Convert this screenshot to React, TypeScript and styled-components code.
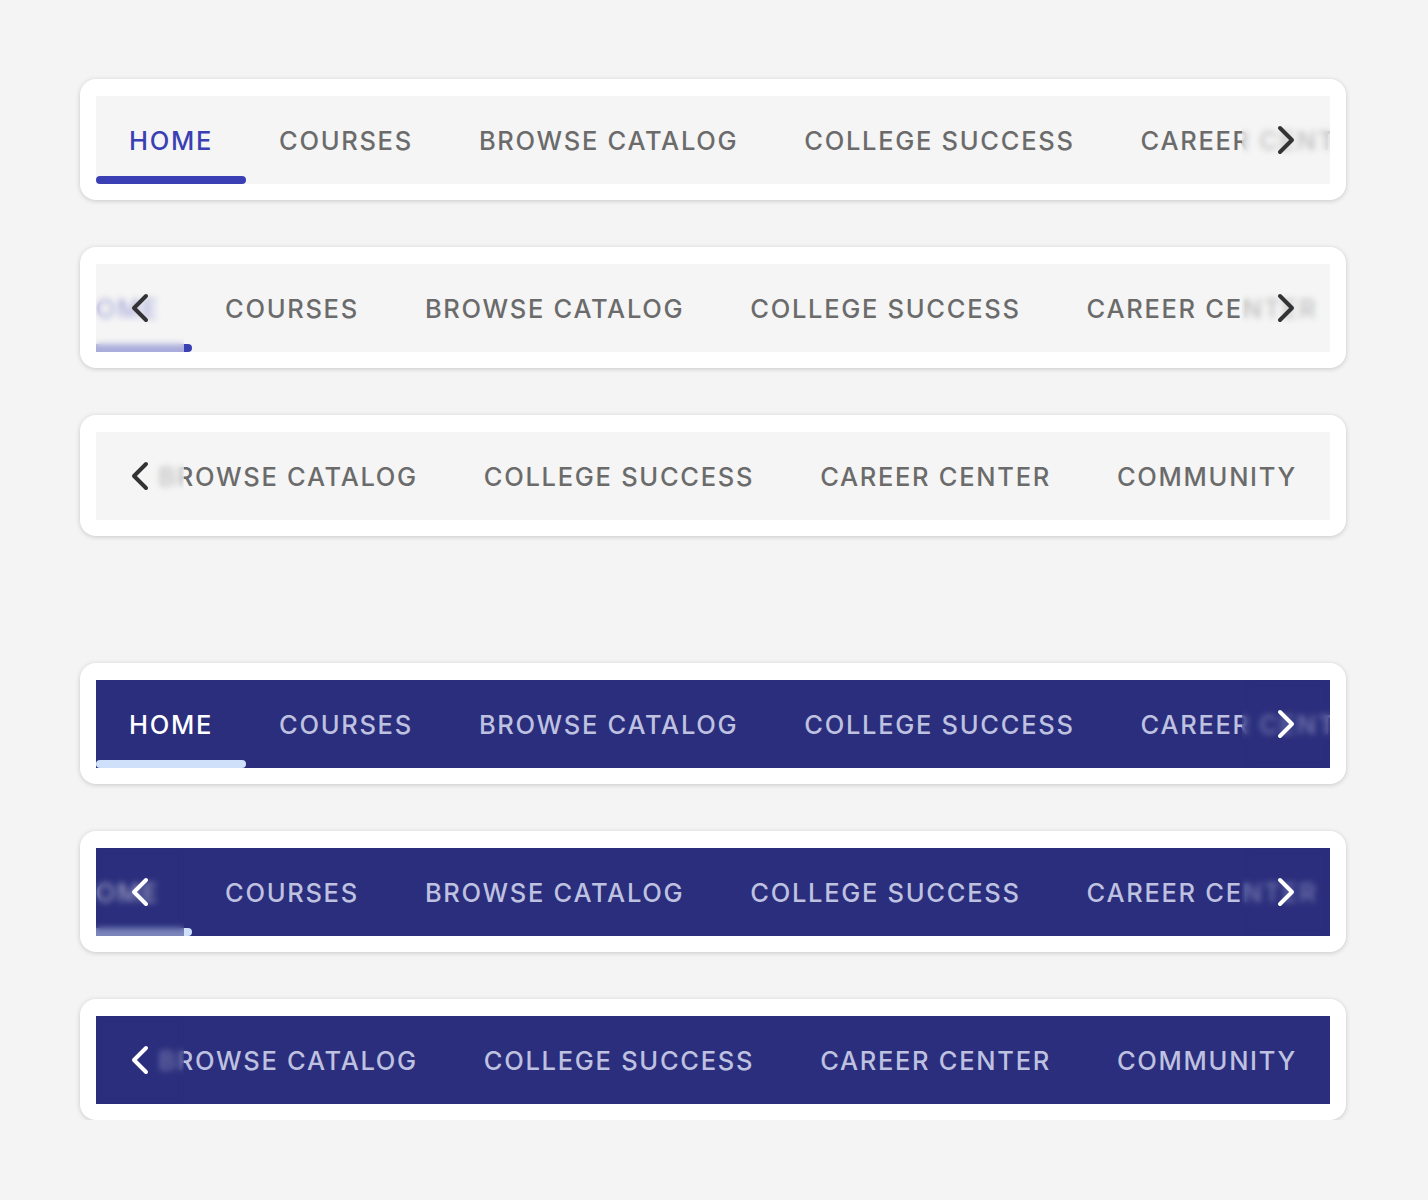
import React from 'react'
import styled, { createGlobalStyle, css } from 'styled-components'

type Variant = 'light' | 'dark'

const palette = {
    light: {
        bar: '#f5f5f5',
        text: '#6b6b6b',
        active: '#3a3fb3',
        indicator: '#3a3fb3',
        arrow: '#333333',
        veil: 'rgba(245, 245, 245, 0.6)',
    },
    dark: {
        bar: '#2a2e7c',
        text: '#bfc1e0',
        active: '#ffffff',
        indicator: '#cfe0fb',
        arrow: '#ffffff',
        veil: 'rgba(42, 46, 124, 0.5)',
    },
}

const GlobalStyle = createGlobalStyle`
    body {
        margin: 0;
        background: #f4f4f4;
        font-family: Inter, "Noto Sans", sans-serif;
    }
`;

const Page = styled.div`
    display: flex;
    flex-direction: column;
    padding: 79px 82px 0 80px;
`;

const Group = styled.section`
    display: flex;
    flex-direction: column;
    gap: 47px;
    & + & {
        margin-top: 127px;
    }
`;

const Card = styled.div`
    background: #ffffff;
    border-radius: 16px;
    padding: 17px 16px 16px;
    box-shadow: 0 1px 5px rgba(0, 0, 0, 0.18);
`;

const Bar = styled.nav<{ $variant: Variant }>`
    position: relative;
    display: flex;
    height: 88px;
    overflow: hidden;
    background: ${p => palette[p.$variant].bar};
`;

const Tabs = styled.ul<{ $offset: number; $end: boolean }>`
    display: flex;
    flex: 1;
    min-width: 0;
    margin: 0;
    padding: 0;
    list-style: none;
    justify-content: ${p => (p.$end ? 'flex-end' : 'flex-start')};
    transform: translateX(${p => -p.$offset}px);
`;

const Tab = styled.li<{ $variant: Variant; $active: boolean }>`
    position: relative;
    flex-shrink: 0;
    display: flex;
    align-items: center;
    padding: 0 33px;
    font-size: 25.5px;
    font-weight: 500;
    letter-spacing: 1.7px;
    white-space: nowrap;
    color: ${p => (p.$active ? palette[p.$variant].active : palette[p.$variant].text)};
    ${p =>
        p.$active &&
        css`
            &::after {
                content: '';
                position: absolute;
                left: 0;
                right: 0;
                bottom: 0;
                height: 8px;
                border-radius: 4px;
                background: ${palette[p.$variant].indicator};
            }
        `}
`;

const Scroller = styled.button<{ $variant: Variant; $side: 'left' | 'right' }>`
    position: absolute;
    top: 0;
    bottom: 0;
    ${p => p.$side}: 0;
    width: 88px;
    display: flex;
    align-items: center;
    justify-content: center;
    border: 0;
    padding: 0;
    color: ${p => palette[p.$variant].arrow};
    background: ${p => palette[p.$variant].veil};
    backdrop-filter: blur(3px);
    cursor: pointer;
`;

const Chevron = ({ dir }: { dir: 'left' | 'right' }) => (
    <svg width="20" height="30" viewBox="0 0 20 30" fill="none">
        <polyline
            points={dir === 'right' ? '4,3 16,15 4,27' : '16,3 4,15 16,27'}
            stroke="currentColor"
            strokeWidth="4"
            strokeLinecap="round"
            strokeLinejoin="round"
        />
    </svg>
);

const items = ['HOME', 'COURSES', 'BROWSE CATALOG', 'COLLEGE SUCCESS', 'CAREER CENTER', 'COMMUNITY'];

interface TabBarProps {
    variant: Variant
    offset?: number
    end?: boolean
}

const TabBar = ({ variant, offset = 0, end = false }: TabBarProps) => (
    <Card>
        <Bar $variant={variant}>
            <Tabs $offset={offset} $end={end}>
                {items.map((label, i) => (
                    <Tab key={label} $variant={variant} $active={i === 0}>
                        {label}
                    </Tab>
                ))}
            </Tabs>
            {(offset > 0 || end) && (
                <Scroller $variant={variant} $side="left" aria-label="Scroll left">
                    <Chevron dir="left" />
                </Scroller>
            )}
            {!end && (
                <Scroller $variant={variant} $side="right" aria-label="Scroll right">
                    <Chevron dir="right" />
                </Scroller>
            )}
        </Bar>
    </Card>
);

const App = () => (
    <>
        <GlobalStyle />
        <Page>
            {(['light', 'dark'] as Variant[]).map(v => (
                <Group key={v}>
                    <TabBar variant={v} />
                    <TabBar variant={v} offset={54} />
                    <TabBar variant={v} end />
                </Group>
            ))}
        </Page>
    </>
);

export default App
